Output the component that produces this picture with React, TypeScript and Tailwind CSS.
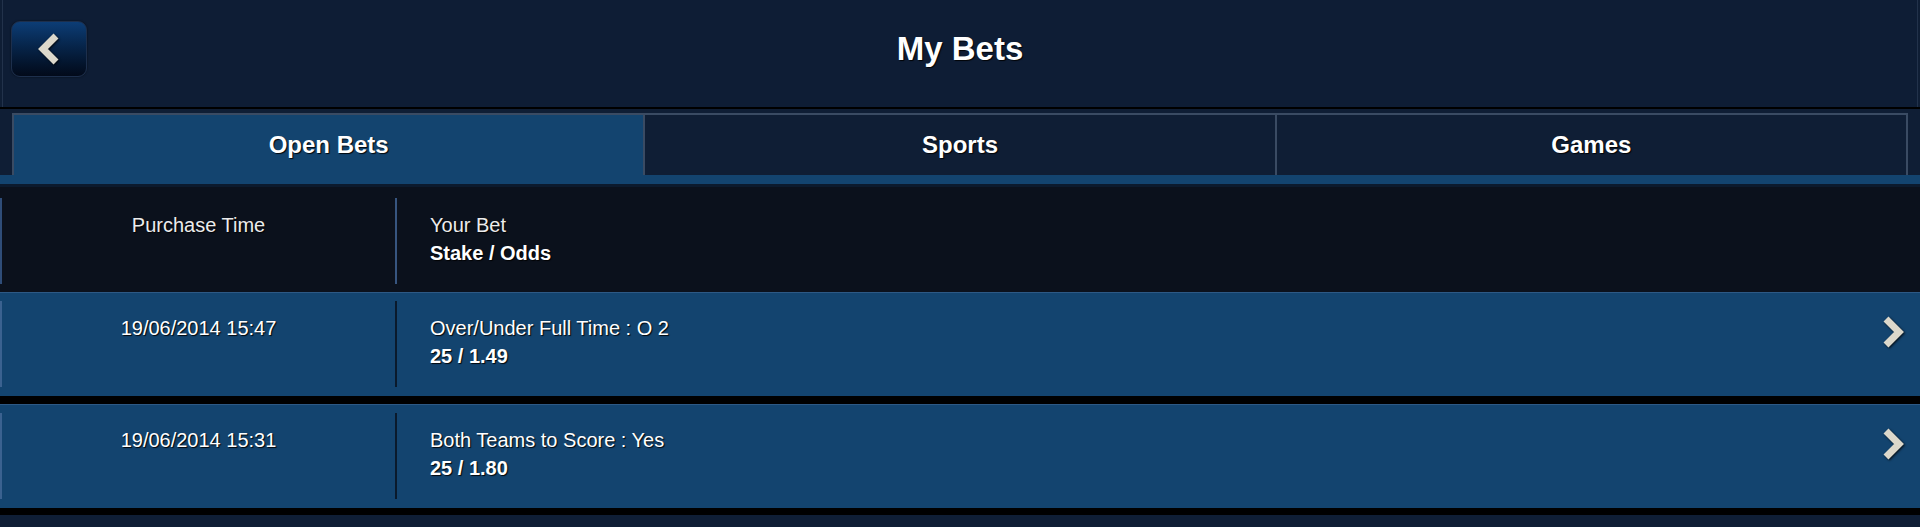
import React from "react";

interface Bet {
  time: string;
  market: string;
  stakeOdds: string;
}

const bets: Bet[] = [
  { time: "19/06/2014 15:47", market: "Over/Under Full Time : O 2", stakeOdds: "25 / 1.49" },
  { time: "19/06/2014 15:31", market: "Both Teams to Score : Yes", stakeOdds: "25 / 1.80" },
];

const tabs = [
  { label: "Open Bets", active: true },
  { label: "Sports", active: false },
  { label: "Games", active: false },
];

const shadow = "[text-shadow:1px_1px_1px_rgba(0,0,0,0.9)]";

function Chevron({ dir }: { dir: "left" | "right" }) {
  const points = dir === "left" ? "19,4 6,17 19,30" : "5,4 18,17 5,30";
  return (
    <svg
      width="24"
      height="34"
      viewBox="0 0 24 34"
      className="drop-shadow-[1px_1px_1px_rgba(0,0,0,0.8)]"
    >
      <polyline
        points={points}
        fill="none"
        stroke="#dcd8cb"
        strokeWidth="7"
        strokeLinejoin="miter"
        strokeLinecap="butt"
      />
    </svg>
  );
}

export default function App() {
  return (
    <div
      className="w-full h-[527px] overflow-hidden bg-[#0f1e35] text-white"
      style={{ fontFamily: '"Liberation Sans", Arial, sans-serif' }}
    >
      {/* Header */}
      <div className="h-[107px] mx-[2px] border-x border-[#22324b] grid grid-cols-[1fr_auto_1fr] items-start pt-[21px] bg-[#0e1d35]">
        <div className="pl-[8px]">
          <button
            className="w-[76px] h-[56px] rounded-[9px] border border-[#1d2f4c] bg-gradient-to-b from-[#0c3d76] to-[#020a1a] flex items-center justify-center shadow-[0_0_2px_rgba(0,0,0,0.6)]"
            aria-label="Back"
          >
            <Chevron dir="left" />
          </button>
        </div>
        <h1 className={`h-[56px] flex items-center text-[33px] font-bold ${shadow}`}>My Bets</h1>
        <div />
      </div>
      <div className="h-[2px] bg-black" />

      {/* Tabs */}
      <div className="pt-[4px] px-[12px] flex">
        {tabs.map((tab, i) => (
          <div
            key={tab.label}
            className={`flex-1 h-[62px] flex items-center justify-center border-t-2 border-l-2 border-[#3a4b63] text-[24px] font-bold ${shadow} ${
              i === tabs.length - 1 ? "border-r-2" : ""
            } ${tab.active ? "bg-[#13446f]" : "bg-[#0f1e35]"}`}
          >
            {tab.label}
          </div>
        ))}
      </div>
      <div className="h-[9px] bg-[#13446f]" />
      <div className="h-[3px] bg-[#0c1a2d]" />

      {/* Table header */}
      <div className="h-[105px] bg-[#0b111c] pt-[11px] flex text-[20px] leading-[28px]">
        <div className={`w-[395px] h-[86px] border-l-2 border-[#2f4d78] pt-[13px] text-center text-[#ececec] ${shadow}`}>
          Purchase Time
        </div>
        <div className={`h-[86px] border-l-2 border-[#37557f] pl-[33px] pt-[13px] ${shadow}`}>
          <div className="text-[#ececec]">Your Bet</div>
          <div className="font-bold">Stake / Odds</div>
        </div>
      </div>

      {/* Bets */}
      <div className="bg-black flex flex-col gap-[8px] pb-[7px]">
        {bets.map((bet) => (
          <div
            key={bet.time}
            className="h-[104px] bg-[#13446f] border-t border-[#2d5985] pt-[8px] flex text-[20px] leading-[28px]"
          >
            <div className={`w-[395px] h-[86px] border-l-2 border-[#3b6290] pt-[13px] text-center ${shadow}`}>
              {bet.time}
            </div>
            <div className={`h-[86px] border-l-2 border-[#0a1a2c] pl-[33px] pt-[13px] ${shadow}`}>
              <div>{bet.market}</div>
              <div className="font-bold">{bet.stakeOdds}</div>
            </div>
            <div className="ml-auto pr-[15px] pt-[14px]">
              <Chevron dir="right" />
            </div>
          </div>
        ))}
      </div>
    </div>
  );
}
